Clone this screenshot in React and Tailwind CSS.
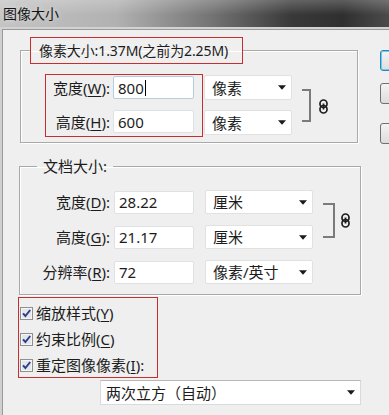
import React from 'react';

const Arrow = () => (
  <svg width="8" height="5" viewBox="0 0 8 5">
    <path d="M0 0.3h8L4 4.8z" fill="#1b1b1b" />
  </svg>
);

const Chain = () => (
  <svg width="9" height="15" viewBox="0 0 9 15" fill="none" stroke="#1e1e1e" strokeWidth="1.7">
    <rect x="1" y="1" width="7" height="7.5" rx="3.5" />
    <rect x="1" y="6.5" width="7" height="7.5" rx="3.5" />
    <path d="M4.5 4.5v6" />
  </svg>
);

const Check = () => (
  <svg width="13" height="13" viewBox="0 0 13 13" className="shrink-0">
    <rect x="0.5" y="0.5" width="12" height="12" fill="#f5f5f5" stroke="#8e8f8f" />
    <rect x="2" y="2" width="9" height="9" fill="#e4e6ea" />
    <path d="M3 6.3l2.4 2.7L10.2 3" fill="none" stroke="#2b3f8e" strokeWidth="2" />
  </svg>
);

function Select({ label, className }) {
  return (
    <div className={`flex items-center justify-between rounded-[2px] border border-[#e1e1e1] bg-white pl-[7px] pr-[5px] ${className}`}>
      <span>{label}</span>
      <Arrow />
    </div>
  );
}

function Field({ value, focused, className }) {
  return (
    <div
      className={`flex h-[23px] items-center rounded-[2px] border bg-white pl-[4px] ${
        focused ? 'border-[#b3cde4]' : 'border-[#dde2e7]'
      } ${className}`}
    >
      {value}
      {focused && <span className="ml-[1px] inline-block h-[16px] w-[1px] bg-black" />}
    </div>
  );
}

const Key = ({ k }) => <span className="underline underline-offset-[2px]">{k}</span>;

function Label({ text, k, className }) {
  return (
    <div className={`shrink-0 text-right ${className}`}>
      {text}(<Key k={k} />):
    </div>
  );
}

export default function App() {
  return (
    <div className="h-[415px] w-[389px] overflow-hidden bg-[#efefef] text-[15px] leading-[20px] text-[#1c1c1c] font-['Noto_Sans','Noto_Sans_CJK_SC',sans-serif]">
      {/* title bar */}
      <div className="flex h-[27px] items-center pl-[3px] bg-[linear-gradient(to_bottom,rgba(255,255,255,0.22),rgba(255,255,255,0)_55%),linear-gradient(to_right,#c4c4c4_0%,#b1b1b1_30%,#727272_55%,#393939_75%,#2f2f2f_88%,#4b4b4b_100%)]">
        <span className="text-[14px] text-[#141414] [text-shadow:0_0_5px_#e6e6e6]">图像大小</span>
      </div>
      <div className="h-[2px] bg-[#d2d2d2]" />

      <div className="flex">
        <div className="w-[2px] shrink-0 bg-[#cfcfcf]" />
        <div className="flex h-[386px] flex-1 border-l border-t border-[#9a9a9a]">
          <div className="w-[377px] shrink-0">
            {/* pixel dimensions */}
            <fieldset className="ml-[17px] mt-[7px] w-[338px] border border-[#a9a9a9] pb-[5px] pl-[9px] pt-[10px] shadow-[inset_1px_1px_0_#fff,1px_1px_0_#fff]">
              <legend className="flex h-[27px] w-[213px] items-center whitespace-nowrap border border-[#c62f2f] pl-[8px] text-[14px] tracking-[-0.1px]">
                像素大小:1.37M(之前为2.25M)
              </legend>
              <div className="flex items-start">
                <div className="ml-[15px] flex w-[158px] flex-col gap-[11px] border border-[#c62f2f] pb-[3px] pr-[8px] pt-[1px]">
                  <div className="flex items-center">
                    <Label text="宽度" k="W" className="w-[64px]" />
                    <Field value="800" focused className="ml-[3px] w-[81px]" />
                  </div>
                  <div className="flex items-center">
                    <Label text="高度" k="H" className="w-[64px]" />
                    <Field value="600" className="ml-[3px] w-[81px]" />
                  </div>
                </div>
                <div className="ml-[1px] mt-[1px] flex flex-col gap-[10px]">
                  <Select label="像素" className="h-[25px] w-[88px]" />
                  <Select label="像素" className="h-[25px] w-[88px]" />
                </div>
                <div className="ml-[10px] mt-[15px] h-[33px] w-[9px] border-y-2 border-r-2 border-[#7b7b7b]" />
                <div className="ml-[8px] mt-[25px] flex">
                  <Chain />
                </div>
              </div>
            </fieldset>

            {/* document size */}
            <fieldset className="ml-[16px] mt-[13px] w-[342px] border border-[#a9a9a9] pb-[10px] pt-[14px] shadow-[inset_1px_1px_0_#fff,1px_1px_0_#fff]">
              <legend className="ml-[17px] px-[6px] leading-[20px]">文档大小:</legend>
              <div className="flex items-start">
                <div className="flex flex-col gap-[11px]">
                  {[
                    ['宽度', 'D', '28.22', '厘米'],
                    ['高度', 'G', '21.17', '厘米'],
                    ['分辨率', 'R', '72', '像素/英寸'],
                  ].map(([t, k, v, u]) => (
                    <div key={k} className="flex h-[24px] items-center">
                      <Label text={t} k={k} className="w-[90px]" />
                      <Field value={v} className="ml-[4px] w-[80px]" />
                      <Select label={u} className="ml-[11px] h-[24px] w-[108px]" />
                    </div>
                  ))}
                </div>
                <div className="ml-[10px] mt-[13px] h-[35px] w-[12px] border-y-2 border-r-2 border-[#7b7b7b]" />
                <div className="ml-[6px] mt-[23px] flex">
                  <Chain />
                </div>
              </div>
            </fieldset>

            {/* options */}
            <div className="ml-[15px] mt-[2px] flex h-[81px] w-[140px] flex-col gap-[4px] border border-[#c62f2f] pl-[1px] pt-[4px]">
              {[
                ['缩放样式', 'Y', ''],
                ['约束比例', 'C', ''],
                ['重定图像像素', 'I', ':'],
              ].map(([t, k, c]) => (
                <div key={k} className="flex h-[22px] items-center">
                  <Check />
                  <span className="ml-[3px] whitespace-nowrap">
                    {t}(<Key k={k} />){c}
                  </span>
                </div>
              ))}
            </div>

            <div className="ml-[97px] mt-[2px] flex h-[25px] w-[261px] items-center justify-between border border-[#dadada] border-t-[#b8b8b8] bg-white pl-[5px] pr-[5px]">
              <span>两次立方（自动）</span>
              <Arrow />
            </div>
          </div>

          {/* dialog buttons, cut off at the right edge */}
          <div className="flex shrink-0 flex-col pt-[20px]">
            <div className="h-[21px] w-[75px] rounded-[3px] border border-[#3c7fb1] bg-gradient-to-b from-[#f4f4f4] to-[#dedede] shadow-[inset_0_0_0_1px_#5fd0f6]" />
            <div className="mt-[12px] h-[21px] w-[75px] rounded-[3px] border border-[#707070] bg-gradient-to-b from-[#f4f4f4] to-[#dcdcdc]" />
            <div className="mt-[19px] h-[21px] w-[75px] rounded-[3px] border border-[#707070] bg-gradient-to-b from-[#f4f4f4] to-[#dcdcdc]" />
          </div>
        </div>
      </div>
    </div>
  );
}
